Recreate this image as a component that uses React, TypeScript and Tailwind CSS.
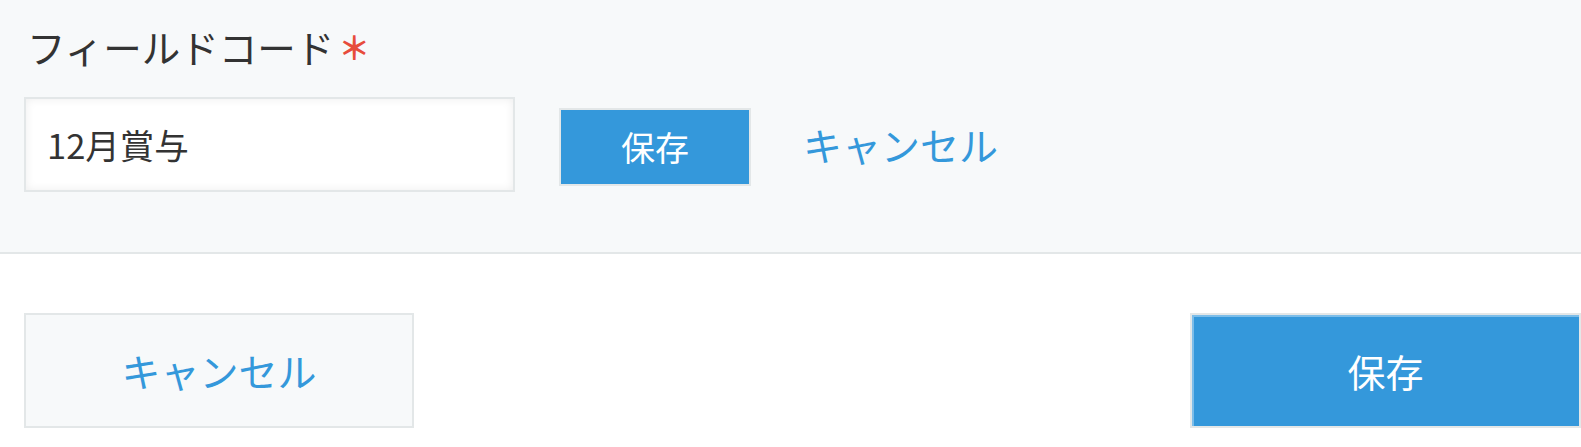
import React from "react";

const FONT = "font-['Noto_Sans_CJK_JP',_'Noto_Sans',_sans-serif]";

export default function App() {
  return (
    <div className={`${FONT} h-[447px] w-full overflow-hidden bg-white`}>
      <div className="h-[254px] border-b-2 border-[#e3e7e8] bg-[#f7f9fa] px-6 pt-[19px]">
        <div className="flex items-center pl-[3px] text-[38.5px] leading-[54px] text-[#333]">
          <span>フィールドコード</span>
          <span className="ml-[4px] text-[32px] font-bold text-[#e74c3c]">＊</span>
        </div>
        <div className="mt-[24px] flex items-center">
          <div className="flex h-[95px] w-[491px] items-center border-2 border-[#e3e7e8] bg-white pl-[21px] text-[34.5px] text-[#333] shadow-[inset_0_0_10px_rgba(0,0,0,0.07)]">
            12月賞与
          </div>
          <button className="ml-[44px] mt-[4px] flex h-[78px] w-[192px] items-center justify-center border-2 border-[#e3e7e8] bg-[#3498db] text-[34px] text-white">
            保存
          </button>
          <a className="ml-[52px] text-[39px] text-[#3498db]">キャンセル</a>
        </div>
      </div>
      <div className="mt-[59px] flex justify-between pl-6">
        <button className="flex h-[115px] w-[390px] items-center justify-center border-2 border-[#e3e7e8] bg-[#f7f9fa] text-[39px] text-[#3498db]">
          キャンセル
        </button>
        <button className="flex h-[115px] w-[391px] items-center justify-center border-2 border-[#e3e7e8] bg-[#3498db] text-[38px] text-white shadow-[inset_2px_2px_0_#7cbde9]">
          保存
        </button>
      </div>
    </div>
  );
}
